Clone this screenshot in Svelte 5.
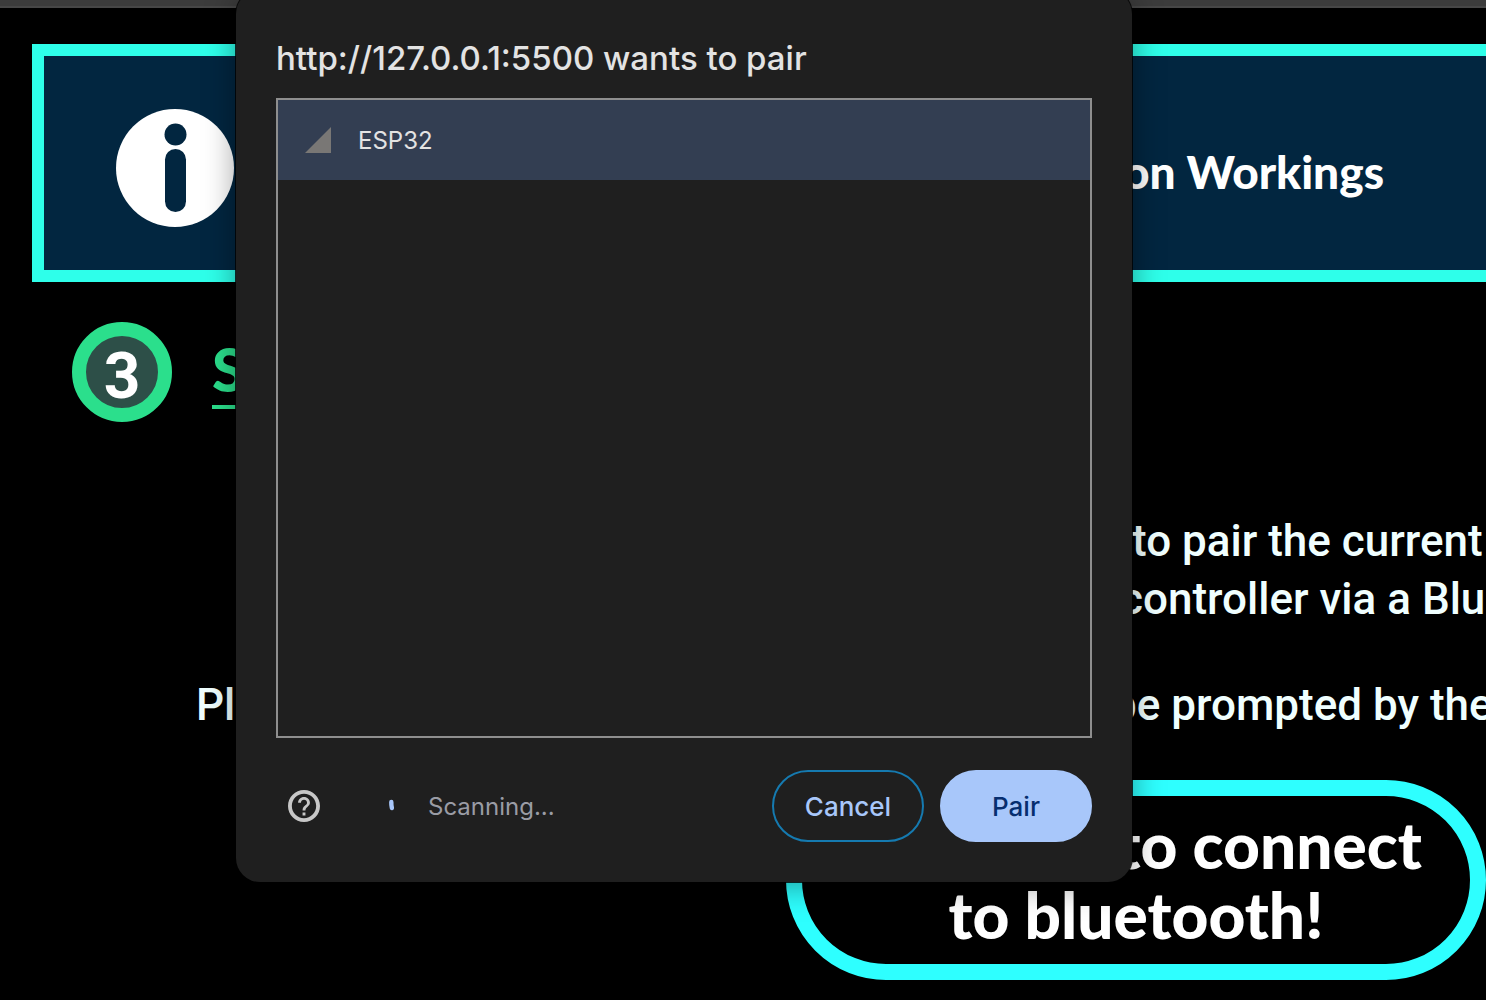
<script>
  const devices = [{ name: 'ESP32' }];
  let selected = $state('ESP32');
</script>

<div class="page">
  <div class="toolbar"></div>

  <main>
    <header class="banner">
      <svg class="info" viewBox="0 0 118 118" aria-hidden="true">
        <circle cx="59" cy="59" r="59" fill="#fff" />
        <circle cx="59.5" cy="25.5" r="11" fill="#022640" />
        <rect x="49" y="40" width="21" height="63" rx="10.5" fill="#022640" />
      </svg>
      <h1>on Workings</h1>
    </header>

    <section class="step">
      <span class="number">3</span>
      <h2>S</h2>
    </section>

    <section class="copy">
      <p class="pair">to pair the current</p>
      <p class="controller">controller via a Blue</p>
      <div class="prompt">
        <p>Pl</p>
        <p>be prompted by the</p>
      </div>
    </section>

    <button class="connect" type="button">
      <span class="first">to connect</span>
      <span>to bluetooth!</span>
    </button>
  </main>

  <div class="dialog" role="dialog" aria-labelledby="dialog-title">
    <h2 id="dialog-title">http://127.0.0.1:5500 wants to pair</h2>
    <div class="devices">
      {#each devices as device}
        <button
          type="button"
          class="device"
          class:selected={selected === device.name}
          onclick={() => (selected = device.name)}
        >
          <svg viewBox="0 0 26 26" aria-hidden="true"><path d="M26 0V26H0Z" fill="#797775" /></svg>
          {device.name}
        </button>
      {/each}
    </div>
    <footer>
      <button type="button" class="help" aria-label="Help">
        <svg viewBox="2 2 20 20" aria-hidden="true">
          <path
            fill="#c7c7c7"
            d="M11.1 17.9h1.8v-1.8h-1.8zM12 2C6.48 2 2 6.48 2 12s4.48 10 10 10 10-4.48 10-10S17.52 2 12 2zm0 17.6c-4.2 0-7.6-3.4-7.6-7.6S7.8 4.4 12 4.4s7.6 3.4 7.6 7.6-3.4 7.6-7.6 7.6zM12 6.4c-2.1 0-3.7 1.6-3.7 3.6h1.8c0-1.1.8-1.9 1.9-1.9s1.9.8 1.9 1.9c0 1.700-2.800 1.700-2.800 4.800h1.800c0-2.200 2.800-2.500 2.800-4.800 0-2-1.600-3.600-3.700-3.600z"
          />
        </svg>
      </button>
      <svg class="spinner" viewBox="0 0 32 32" aria-hidden="true">
        <path d="M15.300 12 Q15.200 15 15.900 18" fill="none" stroke="#a8c7fa" stroke-width="4.400" stroke-linecap="round" />
      </svg>
      <span class="status">Scanning...</span>
      <button type="button" class="action cancel">Cancel</button>
      <button type="button" class="action confirm">Pair</button>
    </footer>
  </div>
</div>

<style>
  :global(body) {
    margin: 0;
    background: #000;
  }
  .page {
    position: relative;
    min-height: 100vh;
    overflow: hidden;
    background: #000;
    color: #fff;
  }
  h1,
  h2,
  p {
    margin: 0;
  }
  button {
    font: inherit;
    cursor: pointer;
  }
  .toolbar {
    box-sizing: border-box;
    height: 8px;
    background: #3c3c3c;
    border-bottom: 2px solid #474747;
  }
  main {
    display: flex;
    flex-direction: column;
    padding: 36px 0 20px 32px;
  }
  .banner {
    display: flex;
    align-items: center;
    justify-content: space-between;
    padding: 53px 102px 43px 72px;
    border: 12px solid #2effea;
    border-right: 0;
    background: #022640;
  }
  .info {
    width: 118px;
    height: 118px;
  }
  h1 {
    padding-top: 8px;
    font: 900 46px/52px Lato, sans-serif;
  }
  .step {
    display: flex;
    align-items: center;
    gap: 40px;
    padding: 40px 40px 0;
  }
  .number {
    box-sizing: border-box;
    display: grid;
    place-items: center;
    width: 100px;
    height: 100px;
    padding-top: 10px;
    border: 14px solid #2bdf8c;
    border-radius: 50%;
    background: #2d4f48;
    font: 700 64px/62px Roboto, sans-serif;
  }
  .step h2 {
    padding-bottom: 6px;
    color: #2bdf8c;
    font: 900 60px/72px Lato, sans-serif;
    text-decoration: underline;
    text-decoration-thickness: 4px;
    text-underline-offset: 13px;
  }
  .copy {
    padding-top: 90px;
    color: #f0ffff;
    font: 500 44px/58px Roboto, sans-serif;
    white-space: nowrap;
  }
  .pair {
    padding-left: 1100px;
  }
  .controller {
    padding-left: 1088px;
  }
  .prompt {
    display: grid;
    grid-template-columns: 916px 1fr;
    padding: 48px 0 0 164px;
  }
  .connect {
    align-self: flex-end;
    display: flex;
    flex-direction: column;
    width: 700px;
    margin-top: 46px;
    padding: 14px 48px;
    border: 16px solid #2effff;
    border-radius: 100px;
    background: #000;
    color: #fff;
    font: 900 64px/70px Lato, sans-serif;
    text-align: center;
  }
  .first {
    text-align: right;
  }
  .dialog {
    position: absolute;
    top: -10px;
    left: 236px;
    box-sizing: border-box;
    width: 896px;
    padding: 48px 40px 40px;
    border-radius: 24px;
    background: #1f1f1f;
    box-shadow:
      0 0 0 1px rgba(0, 0, 0, 0.8),
      0 4px 32px rgba(0, 0, 0, 0.4);
    color: #e3e3e3;
    font-family: Inter, sans-serif;
  }
  .dialog h2 {
    font-size: 33px;
    font-weight: 500;
    line-height: 40px;
  }
  .devices {
    box-sizing: border-box;
    height: 640px;
    margin-top: 20px;
    border: 2px solid #8e8e8e;
  }
  .device {
    display: flex;
    align-items: center;
    gap: 27px;
    width: 100%;
    height: 80px;
    padding: 0 27px;
    border: 0;
    background: none;
    color: #e3e3e3;
    font-size: 24px;
  }
  .device svg {
    width: 26px;
    height: 26px;
  }
  .selected {
    background: #333e52;
  }
  footer {
    display: flex;
    align-items: center;
    margin-top: 32px;
    font-size: 24px;
  }
  .help {
    display: flex;
    padding: 12px;
    border: 0;
    background: none;
  }
  .help svg {
    width: 32px;
    height: 32px;
  }
  .spinner {
    width: 32px;
    height: 32px;
    margin: 0 20px 0 44px;
  }
  .status {
    flex: 1;
    color: #9a9ca5;
  }
  .action {
    box-sizing: border-box;
    width: 152px;
    height: 72px;
    border: 2px solid #157ab0;
    border-radius: 36px;
    background: none;
    color: #a8c7fa;
    font-size: 26px;
    font-weight: 500;
  }
  .confirm {
    margin-left: 16px;
    border-color: #a8c7fa;
    background: #a8c7fa;
    color: #062e6f;
  }
</style>
